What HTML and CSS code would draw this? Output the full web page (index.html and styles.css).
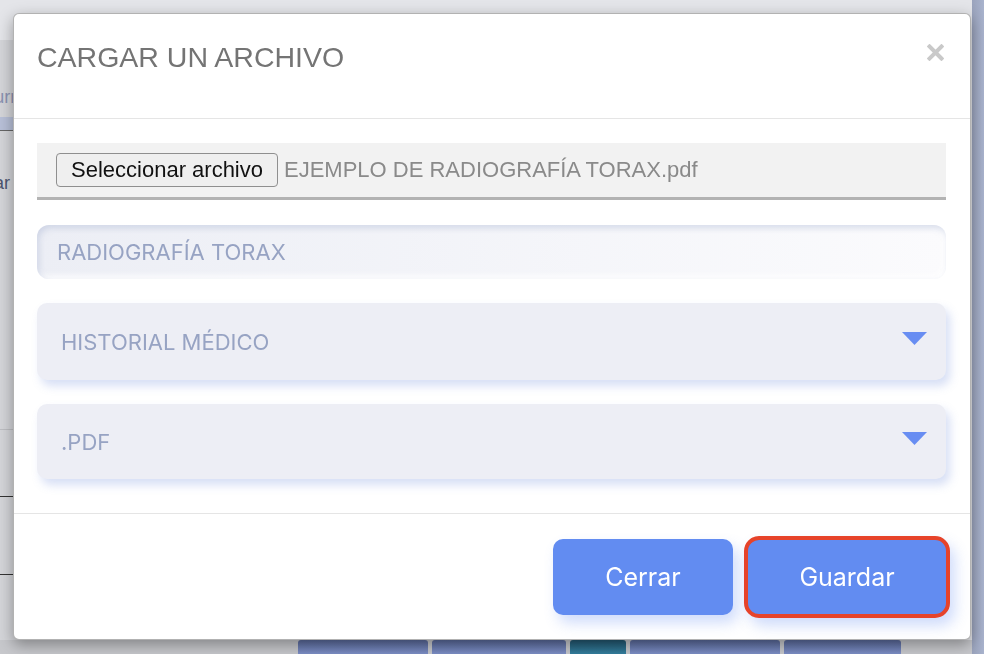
FILE: index.html
```html
<!DOCTYPE html>
<html lang="es">

<head>
    <meta charset="UTF-8">
    <meta name="viewport" content="width=device-width, initial-scale=1.0">
    <title>Cargar un archivo</title>
    <link rel="stylesheet" href="styles.css">
</head>

<body>

    <!-- pagina de fondo (tapada por el modal) -->
    <div class="page">
        <div class="page-left">
            <div class="page-top"></div>
            <div class="page-body">
                <aside class="side">
                    <div class="side-row side-first"><span class="side-label">Turno</span></div>
                    <div class="side-band"></div>
                    <div class="side-row side-second"><span class="side-label side-dark">Buscar</span></div>
                    <div class="side-row side-third"></div>
                    <div class="side-row side-fourth"></div>
                    <div class="side-row side-fifth"></div>
                </aside>
                <div class="main"></div>
            </div>
            <div class="tabs">
                <span class="tab tab-a"></span>
                <span class="tab tab-b"></span>
                <span class="tab tab-teal"></span>
                <span class="tab tab-c"></span>
                <span class="tab tab-d"></span>
            </div>
        </div>
        <div class="rail"></div>
    </div>

    <!-- modal -->
    <div class="modal">
        <div class="modal-header">
            <h4 class="modal-title">CARGAR UN ARCHIVO</h4>
            <button class="close" type="button" aria-label="Cerrar">
                <svg width="17" height="17" viewBox="0 0 17 17">
                    <path d="M2.5 2.5 L14.5 14.5 M14.5 2.5 L2.5 14.5" stroke="#c9c9c9" stroke-width="4" stroke-linecap="square" fill="none"/>
                </svg>
            </button>
        </div>

        <div class="modal-body">
            <div class="file-row">
                <button class="file-btn" type="button">Seleccionar archivo</button>
                <span class="file-name">EJEMPLO DE RADIOGRAFÍA TORAX.pdf</span>
            </div>

            <div class="text-field">RADIOGRAFÍA TORAX</div>

            <div class="select-field">
                <span>HISTORIAL MÉDICO</span>
                <svg class="caret" width="25" height="13" viewBox="0 0 25 13">
                    <path d="M0 0 H25 L12.5 13 Z" fill="#688df2"/>
                </svg>
            </div>

            <div class="select-field select-short">
                <span>.PDF</span>
                <svg class="caret" width="25" height="13" viewBox="0 0 25 13">
                    <path d="M0 0 H25 L12.5 13 Z" fill="#688df2"/>
                </svg>
            </div>
        </div>

        <div class="modal-footer">
            <button class="btn" type="button">Cerrar</button>
            <button class="btn btn-save" type="button">Guardar</button>
        </div>
    </div>

</body>

</html>
```

FILE: styles.css
```css
body {
    margin: 0;
    font-family: "Liberation Sans", Arial, sans-serif;
    overflow: hidden;
}

/* fondo */
.page {
    display: flex;
    height: 100vh;
    background-color: #e4e5e9;
}

.page-left {
    flex: 1;
    display: flex;
    flex-direction: column;
}

.page-top {
    height: 40px;
}

.page-body {
    flex: 1;
    display: flex;
}

.side {
    width: 290px;
    display: flex;
    flex-direction: column;
    background-color: #d4d5d9;
    overflow: hidden;
}

.side-label {
    font-size: 18px;
    line-height: 20px;
    color: #8b93b2;
    margin-left: -16px;
    white-space: nowrap;
}

.side-dark {
    color: #4e5570;
    margin-left: -46px;
}

.side-first {
    height: 77px;
    display: flex;
    align-items: flex-end;
    padding-bottom: 10px;
    box-sizing: border-box;
}

.side-band {
    height: 13px;
    background-color: #b8c0d8;
    border-bottom: 1px solid #666;
}

.side-second {
    height: 299px;
    padding-top: 42px;
    box-sizing: border-box;
    border-bottom: 1px solid #bdbec2;
}

.side-third {
    height: 66px;
    border-bottom: 1px solid #333;
}

.side-fourth {
    height: 77px;
    border-bottom: 1px solid #333;
}

.side-fifth {
    flex: 1;
}

.main {
    flex: 1;
}

.rail {
    width: 12px;
    background: linear-gradient(to right, #9aa3bc, #a9b3cd);
}

.tabs {
    height: 14px;
    display: flex;
    gap: 4px;
    padding-left: 298px;
    background-color: #c7c8cc;
}

.tab {
    background: linear-gradient(#5a6a9c, #7d8fc6);
    border-radius: 3px 3px 0 0;
}

.tab-a { width: 130px; }
.tab-b { width: 134px; }
.tab-teal { width: 56px; background: linear-gradient(#22566f, #347f9e); }
.tab-c { width: 150px; }
.tab-d { width: 117px; }

/* modal */
.modal {
    position: fixed;
    left: 13px;
    top: 13px;
    width: 958px;
    height: 627px;
    box-sizing: border-box;
    display: flex;
    flex-direction: column;
    background-color: #fff;
    border: 1px solid rgba(0, 0, 0, 0.3);
    border-radius: 6px;
    box-shadow: 0 5px 15px rgba(0, 0, 0, 0.35);
}

.modal-header {
    height: 105px;
    box-sizing: border-box;
    display: flex;
    justify-content: space-between;
    align-items: flex-start;
    padding: 0 26px 0 23px;
    border-bottom: 1px solid #e5e5e5;
}

.modal-title {
    margin: 0;
    padding-top: 27px;
    font-size: 28.5px;
    line-height: 32px;
    font-weight: normal;
    color: #747474;
}

.close {
    margin-top: 30px;
    padding: 0;
    border: none;
    background: none;
    display: flex;
}

.modal-body {
    display: flex;
    flex-direction: column;
    gap: 24px;
    padding: 24px 24px 34px 23px;
    font-family: Inter, "Liberation Sans", sans-serif;
}

.file-row {
    height: 57px;
    box-sizing: border-box;
    display: flex;
    align-items: center;
    gap: 6px;
    padding-left: 19px;
    margin-bottom: 1px;
    background-color: #f2f2f2;
    border-bottom: 3px solid #b3b3b3;
    font-family: "Liberation Sans", Arial, sans-serif;
}

.file-btn {
    height: 34px;
    padding: 0 14px;
    font-family: "Liberation Sans", Arial, sans-serif;
    font-size: 22px;
    color: #111;
    background-color: #efefef;
    border: 1px solid #8f8f8f;
    border-radius: 4px;
}

.file-name {
    font-size: 22px;
    color: #8a8a8a;
}

.text-field {
    height: 54px;
    box-sizing: border-box;
    display: flex;
    align-items: center;
    padding-left: 20px;
    font-size: 22px;
    color: #97a3c3;
    border-radius: 12px;
    background: linear-gradient(to right, #eceef5, #fbfbfd);
    box-shadow: inset 2px 3px 6px rgba(150, 162, 200, 0.35), inset -3px -3px 6px #fff;
}

.select-field {
    height: 77px;
    box-sizing: border-box;
    display: flex;
    justify-content: space-between;
    align-items: center;
    padding: 0 19px 0 24px;
    font-size: 22px;
    color: #97a3c3;
    border-radius: 10px;
    background-color: #edeef5;
    box-shadow: 4px 6px 10px rgba(110, 140, 220, 0.28);
}

.select-short {
    height: 75px;
}

.caret {
    margin-top: -6px;
}

.modal-footer {
    flex: 1;
    display: flex;
    justify-content: flex-end;
    align-items: center;
    gap: 11px;
    padding-right: 20px;
    border-top: 1px solid #e5e5e5;
}

.btn {
    width: 180px;
    height: 76px;
    border: none;
    border-radius: 10px;
    background-color: #628cf1;
    color: #fff;
    font-family: Inter, "Liberation Sans", sans-serif;
    font-size: 25px;
    box-shadow: 5px 8px 14px rgba(98, 140, 241, 0.3);
    cursor: pointer;
}

.btn-save {
    width: 206px;
    height: 82px;
    border: 4px solid #e6432a;
    border-radius: 15px;
}
```
